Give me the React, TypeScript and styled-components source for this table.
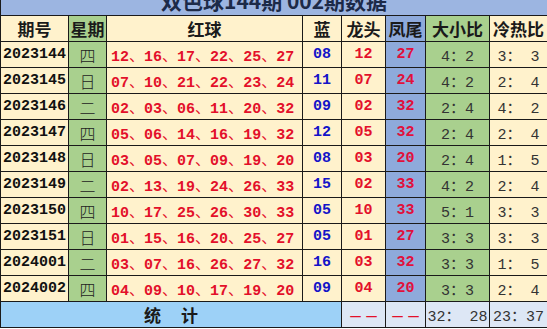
import styled, { createGlobalStyle } from "styled-components";

const GlobalStyle = createGlobalStyle`
    html, body {
        margin: 0;
        padding: 0;
        background: #ffffff;
    }
`;

type Draw = {
    issue: string;
    week: string;
    reds: string[];
    blue: string;
    head: string;
    tail: string;
    size: string;
    heat: string;
};

const draws: Draw[] = [
    { issue: "2023144", week: "四", reds: ["12", "16", "17", "22", "25", "27"], blue: "08", head: "12", tail: "27", size: "4：2", heat: "3： 3" },
    { issue: "2023145", week: "日", reds: ["07", "10", "21", "22", "23", "24"], blue: "11", head: "07", tail: "24", size: "4：2", heat: "2： 4" },
    { issue: "2023146", week: "二", reds: ["02", "03", "06", "11", "20", "32"], blue: "09", head: "02", tail: "32", size: "2：4", heat: "4： 2" },
    { issue: "2023147", week: "四", reds: ["05", "06", "14", "16", "19", "32"], blue: "12", head: "05", tail: "32", size: "2：4", heat: "2： 4" },
    { issue: "2023148", week: "日", reds: ["03", "05", "07", "09", "19", "20"], blue: "08", head: "03", tail: "20", size: "2：4", heat: "1： 5" },
    { issue: "2023149", week: "二", reds: ["02", "13", "19", "24", "26", "33"], blue: "15", head: "02", tail: "33", size: "4：2", heat: "2： 4" },
    { issue: "2023150", week: "四", reds: ["10", "17", "25", "26", "30", "33"], blue: "05", head: "10", tail: "33", size: "5：1", heat: "3： 3" },
    { issue: "2023151", week: "日", reds: ["01", "15", "16", "20", "25", "27"], blue: "05", head: "01", tail: "27", size: "3：3", heat: "3： 3" },
    { issue: "2024001", week: "二", reds: ["03", "07", "16", "26", "27", "32"], blue: "16", head: "03", tail: "32", size: "3：3", heat: "1： 5" },
    { issue: "2024002", week: "四", reds: ["04", "09", "10", "17", "19", "20"], blue: "09", head: "04", tail: "20", size: "3：3", heat: "2： 4" },
];

const colors = {
    cream: "#fff2cc",
    green: "#a9d08e",
    blue: "#8eaadb",
    title: "#9cb5e1",
    sky: "#9dd1f7",
    lilac: "#dde7f5",
};

const Table = styled.table`
    width: 547px;
    border-collapse: collapse;
    table-layout: fixed;
    font-family: "Liberation Mono", "Noto Sans CJK SC", monospace;
`;

const Cell = styled.td<{ $bg?: string }>`
    border: 1px solid #1a1a1a;
    background: ${(p) => p.$bg || colors.cream};
    height: 25px;
    padding: 0;
    text-align: center;
    white-space: nowrap;
    overflow: hidden;
`;

const TitleCell = styled.td`
    border: 1px solid #1a1a1a;
    border-top: none;
    background: ${colors.title};
    height: 15px;
    padding: 0;
`;

const TitleClip = styled.div`
    height: 15px;
    overflow: hidden;
    display: flex;
    justify-content: center;
    align-items: flex-end;
`;

const TitleText = styled.div`
    font-family: "Noto Sans CJK SC", sans-serif;
    font-weight: 700;
    font-size: 21px;
    line-height: 21px;
    color: #1c2a48;
    margin-bottom: 4px;
    white-space: nowrap;
`;

const HeadCell = styled(Cell)`
    height: 23px;
    font-family: "Noto Sans CJK SC", sans-serif;
    font-weight: 700;
    font-size: 17px;
    color: #1a1a1a;
`;

const Issue = styled(Cell)`
    font-weight: 700;
    font-size: 15px;
    color: #111;
    text-align: left;
    padding-left: 2px;
`;

const Week = styled(Cell)`
    font-family: "Noto Sans CJK SC", sans-serif;
    font-weight: 300;
    font-size: 16px;
    color: #222;
`;

const Reds = styled(Cell)`
    font-weight: 700;
    font-size: 15px;
    color: #e3102a;
    text-align: left;
    padding-left: 4px;
`;

const Num = styled(Cell)<{ $color: string }>`
    font-weight: 700;
    font-size: 15px;
    color: ${(p) => p.$color};
`;

const Ratio = styled(Cell)`
    font-size: 15px;
    color: #333;
`;

const StatLabel = styled(Cell)`
    background: ${colors.sky};
    font-family: "Noto Sans CJK SC", sans-serif;
    font-weight: 700;
    font-size: 17px;
    color: #1a1a1a;
    letter-spacing: 20px;
    text-indent: 20px;
`;

const Dash = styled(Cell)`
    font-family: "Liberation Sans", sans-serif;
    font-size: 19px;
    color: #e3102a;
`;

const Sep = styled.span`
    font-family: "Noto Sans CJK SC", sans-serif;
    font-weight: 400;
`;

export default function App() {
    return (
        <>
            <GlobalStyle />
            <Table>
                <colgroup>
                    <col style={{ width: 68 }} />
                    <col style={{ width: 38 }} />
                    <col style={{ width: 196 }} />
                    <col style={{ width: 39 }} />
                    <col style={{ width: 44 }} />
                    <col style={{ width: 40 }} />
                    <col style={{ width: 64 }} />
                    <col style={{ width: 58 }} />
                </colgroup>
                <tbody>
                    <tr>
                        <TitleCell colSpan={8}>
                            <TitleClip>
                                <TitleText>双色球144期 002期数据</TitleText>
                            </TitleClip>
                        </TitleCell>
                    </tr>
                    <tr>
                        <HeadCell>期号</HeadCell>
                        <HeadCell $bg={colors.green}>星期</HeadCell>
                        <HeadCell>红球</HeadCell>
                        <HeadCell>蓝</HeadCell>
                        <HeadCell>龙头</HeadCell>
                        <HeadCell $bg={colors.blue}>凤尾</HeadCell>
                        <HeadCell $bg={colors.green}>大小比</HeadCell>
                        <HeadCell>冷热比</HeadCell>
                    </tr>
                    {draws.map((d) => (
                        <tr key={d.issue}>
                            <Issue>{d.issue}</Issue>
                            <Week $bg={colors.green}>{d.week}</Week>
                            <Reds>
                                {d.reds.map((r, i) => (
                                    <span key={i}>
                                        {r}
                                        {i < d.reds.length - 1 && <Sep>、</Sep>}
                                    </span>
                                ))}
                            </Reds>
                            <Num $color="#1414c8">{d.blue}</Num>
                            <Num $color="#e3102a">{d.head}</Num>
                            <Num $color="#e0103c" $bg={colors.blue}>{d.tail}</Num>
                            <Ratio $bg={colors.green}>{d.size}</Ratio>
                            <Ratio>{d.heat}</Ratio>
                        </tr>
                    ))}
                    <tr>
                        <StatLabel colSpan={4}>统计</StatLabel>
                        <Dash $bg={colors.lilac}>– –</Dash>
                        <Dash $bg={colors.lilac}>– –</Dash>
                        <Ratio $bg={colors.lilac}>32： 28</Ratio>
                        <Ratio $bg={colors.lilac}>23：37</Ratio>
                    </tr>
                </tbody>
            </Table>
        </>
    );
}
